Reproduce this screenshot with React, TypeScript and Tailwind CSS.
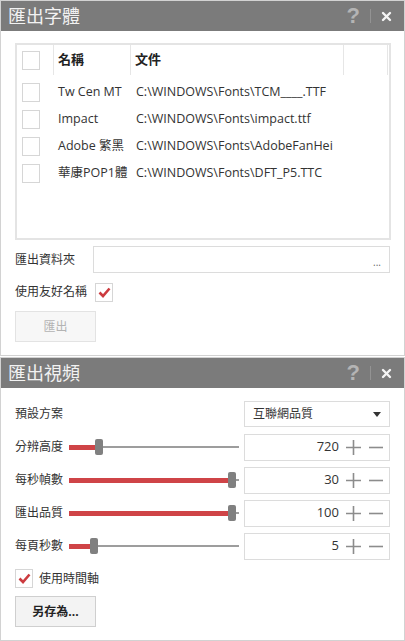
import React from 'react';

const FONT = { fontFamily: '"Open Sans", "Noto Sans CJK TC", sans-serif' };

const fonts = [
  { name: 'Tw Cen MT', file: 'C:\\WINDOWS\\Fonts\\TCM____.TTF' },
  { name: 'Impact', file: 'C:\\WINDOWS\\Fonts\\impact.ttf' },
  { name: 'Adobe 繁黑', file: 'C:\\WINDOWS\\Fonts\\AdobeFanHei' },
  { name: '華康POP1體', file: 'C:\\WINDOWS\\Fonts\\DFT_P5.TTC' },
];

const sliders = [
  { label: '分辨高度', value: '720', pct: 17 },
  { label: '每秒幀數', value: '30', pct: 100 },
  { label: '匯出品質', value: '100', pct: 100 },
  { label: '每頁秒數', value: '5', pct: 14 },
];

function TitleBar({ title }: { title: string }) {
  return (
    <div className="h-[30px] bg-[#7b7b7b] flex items-center pl-[7px] pr-[12px]">
      <span className="text-[18px] text-[#f2f2f2] flex-1 leading-none">{title}</span>
      <span className="text-[22px] font-bold text-[#b4b4b4] leading-none" style={{ fontFamily: '"Liberation Sans", sans-serif' }}>?</span>
      <span className="w-px h-[14px] bg-[#939393] mx-[10px]" />
      <svg width="11" height="11" viewBox="0 0 11 11">
        <path d="M2 2 L9 9 M9 2 L2 9" stroke="#f4f4f4" strokeWidth="2.4" strokeLinecap="round" />
      </svg>
    </div>
  );
}

function Check({ checked }: { checked?: boolean }) {
  return (
    <div className="w-[18px] h-[19px] border border-[#d6d6d6] bg-white flex items-center justify-center shrink-0">
      {checked && (
        <svg width="13" height="11" viewBox="0 0 13 11">
          <path d="M1.5 5.5 L5 9 L11.5 1.5" stroke="#cc3b3f" strokeWidth="2.6" fill="none" />
        </svg>
      )}
    </div>
  );
}

function Slider({ pct }: { pct: number }) {
  return (
    <div className="relative w-[170px] h-[18px] flex items-center">
      <div className="w-full h-[2px] bg-[#9d9d9d]" />
      <div className="absolute left-0 h-[5px] bg-[#cf4447]" style={{ width: `calc(${pct}% * 0.94)` }} />
      <div
        className="absolute w-[8px] h-[16px] rounded-[2px] bg-[#808080]"
        style={{ left: `calc(${pct}% * 0.94 - 1px)` }}
      />
    </div>
  );
}

export default function App() {
  return (
    <div className="w-[405px] h-[641px] bg-white text-[#333]" style={FONT}>
      {/* 匯出字體 */}
      <div className="h-[356px] border border-[#d2d2d2] flex flex-col">
        <TitleBar title="匯出字體" />
        <div className="px-[14px] pt-[12px] flex flex-col">
          <div className="h-[197px] border-2 border-[#e4e4e4] w-[376px]">
            <div className="flex h-[30px] text-[13px] font-bold text-[#222]">
              <div className="w-[37px] border-r border-[#e6e6e6] flex items-center pl-[5px]">
                <Check />
              </div>
              <div className="w-[77px] border-r border-[#e6e6e6] flex items-center pl-[4px]">名稱</div>
              <div className="w-[213px] border-r border-[#e6e6e6] flex items-center pl-[4px]">文件</div>
              <div className="w-[44px] border-r border-[#e6e6e6]" />
            </div>
            <div className="flex flex-col pt-[4px]">
              {fonts.map(f => (
                <div key={f.name} className="flex items-center h-[27px] text-[12.5px] text-[#333]">
                  <div className="w-[37px] pl-[5px]">
                    <Check />
                  </div>
                  <div className="w-[77px] pl-[4px] pr-[4px] whitespace-nowrap overflow-hidden">{f.name}</div>
                  <div className="pl-[5px] whitespace-nowrap">{f.file}</div>
                </div>
              ))}
            </div>
          </div>
          <div className="flex items-center mt-[6px] h-[27px]">
            <span className="w-[78px] text-[12px]">匯出資料夾</span>
            <div className="flex-1 h-[27px] border border-[#dcdcdc] flex items-end justify-end pr-[8px] pb-[5px] text-[10px] text-[#666] leading-none">...</div>
          </div>
          <div className="flex items-center mt-[9px] h-[20px] gap-[8px]">
            <span className="text-[12px]">使用友好名稱</span>
            <Check checked />
          </div>
          <button className="mt-[9px] w-[81px] h-[31px] bg-[#f7f7f7] border border-[#e3e3e3] text-[12px] text-[#b3b3b3]">
            匯出
          </button>
        </div>
      </div>

      {/* 匯出視頻 */}
      <div className="mt-[1px] h-[284px] border border-[#d2d2d2] flex flex-col">
        <TitleBar title="匯出視頻" />
        <div className="px-[14px] pt-[13px] flex flex-col gap-[7px]">
          <div className="flex items-center h-[26px]">
            <span className="flex-1 text-[12px]">預設方案</span>
            <div className="w-[146px] h-[26px] border border-[#dcdcdc] flex items-center pl-[8px] pr-[8px] text-[12px]">
              <span className="flex-1">互聯網品質</span>
              <svg width="8" height="5" viewBox="0 0 8 5">
                <path d="M0 0 H8 L4 5 Z" fill="#333" />
              </svg>
            </div>
          </div>
          {sliders.map(s => (
            <div key={s.label} className="flex items-center h-[26px]">
              <span className="w-[54px] text-[12px]">{s.label}</span>
              <Slider pct={s.pct} />
              <div className="ml-auto w-[146px] h-[27px] border border-[#dcdcdc] flex items-center justify-end pr-[6px] text-[13px]">
                <span className="mr-[7px]">{s.value}</span>
                <svg width="15" height="15" viewBox="0 0 15 15" className="mr-[8px]">
                  <path d="M7.5 0 V15 M0 7.5 H15" stroke="#8c8c8c" strokeWidth="1.6" />
                </svg>
                <svg width="14" height="15" viewBox="0 0 14 15">
                  <path d="M0 7.5 H14" stroke="#8c8c8c" strokeWidth="1.6" />
                </svg>
              </div>
            </div>
          ))}
          <div className="flex items-center mt-[3px] gap-[6px]">
            <Check checked />
            <span className="text-[12px]">使用時間軸</span>
          </div>
          <button className="mt-[1px] w-[81px] h-[31px] bg-[#f3f3f3] border border-[#cfcfcf] text-[12px] font-bold text-[#222]">
            另存為...
          </button>
        </div>
      </div>
    </div>
  );
}
